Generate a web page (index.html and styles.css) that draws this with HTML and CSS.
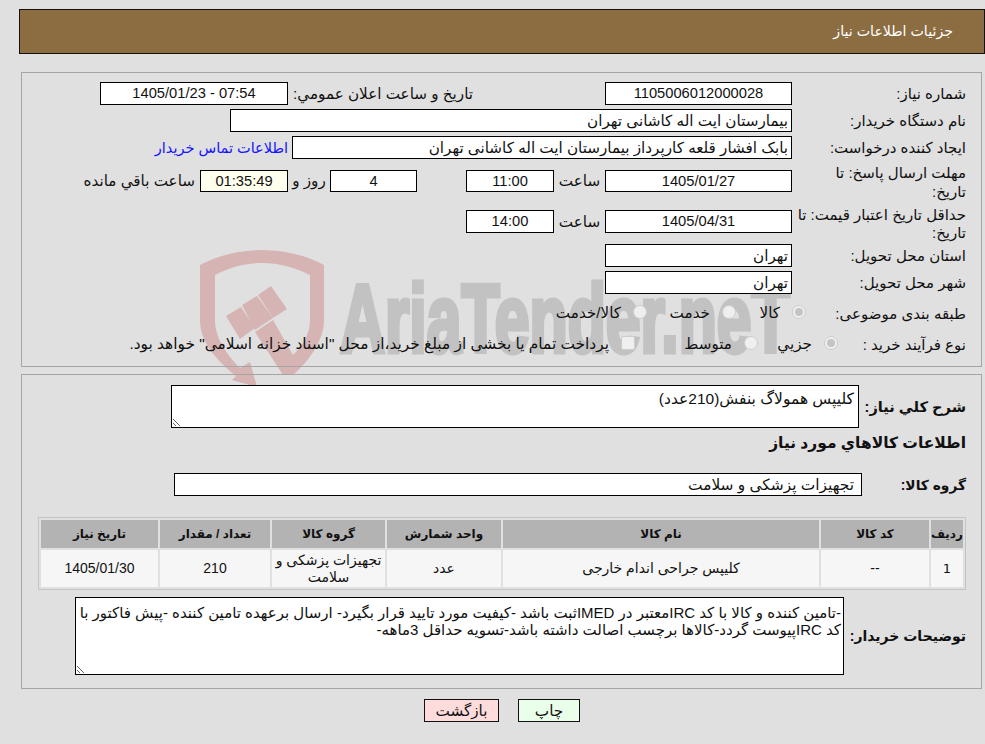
FILE: index.html
```html
<!DOCTYPE html>
<html lang="fa" dir="rtl">
<head>
<meta charset="utf-8">
<title>جزئيات اطلاعات نياز</title>
<link rel="stylesheet" href="styles.css">
</head>
<body>
<div class="watermark" aria-hidden="true">
  <svg class="wm-logo" viewBox="0 0 140 140" width="140" height="140">
    <path class="wm-red" d="M0 15 C20 5 40 0 62 0 C84 0 105 5 124 15 L124 70 C124 90 110 110 93 125 L83 125 L55 82 L73 70 L93 105 C103 95 110 84 110 70 L110 25 C94 17 78 13 62 13 C46 13 30 17 15 25 L15 70 C15 88 27 105 40 118 L50 112 L57 137 L32 130 L36 126 C16 110 0 92 0 70 Z"/>
    <path class="wm-red" d="M26 66 L41 57 L55 78 L40 89 Z"/>
    <path class="wm-red" d="M42 55 L57 46 L73 68 L55 80 Z"/>
    <path class="wm-red" d="M58 45 L71 36 L87 59 L73 68 Z"/>
  </svg>
  <div class="wm-text">AriaTender.neT</div>
</div>

<header class="title-bar">جزئیات اطلاعات نیاز</header>

<section class="panel panel-top">
  <div class="row">
    <div class="lbl">شماره نیاز:</div>
    <div class="box w187 center">1105006012000028</div>
    <div class="pub">تاریخ و ساعت اعلان عمومي:</div>
    <div class="box w188 center ltr">1405/01/23 - 07:54</div>
  </div>
  <div class="row">
    <div class="lbl">نام دستگاه خریدار:</div>
    <div class="box buyer">بیمارستان ایت اله کاشانی تهران</div>
  </div>
  <div class="row">
    <div class="lbl">ایجاد کننده درخواست:</div>
    <div class="box creator">بابک افشار قلعه کارپرداز بیمارستان ایت اله کاشانی تهران</div>
    <a class="contact" href="#">اطلاعات تماس خریدار</a>
  </div>
  <div class="row tall t1">
    <div class="lbl">مهلت ارسال پاسخ: تا تاریخ:</div>
    <div class="box w187 center">1405/01/27</div>
    <div class="hour">ساعت</div>
    <div class="box w88 center">11:00</div>
    <div class="box w87 center days">4</div>
    <div class="day-lbl">روز و</div>
    <div class="box w88 center timer">01:35:49</div>
    <div class="remain">ساعت باقي مانده</div>
  </div>
  <div class="row tall t2">
    <div class="lbl">حداقل تاریخ اعتبار قیمت: تا تاریخ:</div>
    <div class="box w187 center">1405/04/31</div>
    <div class="hour">ساعت</div>
    <div class="box w88 center">14:00</div>
  </div>
  <div class="row">
    <div class="lbl">استان محل تحویل:</div>
    <div class="box w187">تهران</div>
  </div>
  <div class="row">
    <div class="lbl">شهر محل تحویل:</div>
    <div class="box w187">تهران</div>
  </div>
  <div class="row opts o-cat">
    <div class="lbl">طبقه بندی موضوعی:</div>
    <div class="opt w70"><span class="radio on"></span><span>کالا</span></div>
    <div class="opt w89"><span class="radio"></span><span>خدمت</span></div>
    <div class="opt"><span class="radio"></span><span>کالا/خدمت</span></div>
  </div>
  <div class="row opts o-type">
    <div class="lbl">نوع فرآیند خرید :</div>
    <div class="opt w80"><span class="radio on"></span><span>جزیي</span></div>
    <div class="opt w123"><span class="radio"></span><span>متوسط</span></div>
    <div class="opt"><span class="check"></span><span class="treasury">پرداخت تمام یا بخشی از مبلغ خرید،از محل "اسناد خزانه اسلامی" خواهد بود.</span></div>
  </div>
</section>

<section class="panel panel-main">
  <div class="line l-desc">
    <div class="blbl">شرح کلي نیاز:</div>
    <textarea class="area desc" readonly>کلیپس همولاگ بنفش(210عدد)</textarea>
  </div>
  <h2 class="goods-title">اطلاعات کالاهاي مورد نیاز</h2>
  <div class="line l-group">
    <div class="blbl">گروه کالا:</div>
    <div class="box group">تجهیزات پزشکی و سلامت</div>
  </div>
  <table class="goods">
    <thead>
      <tr><th class="c1">ردیف</th><th class="c2">کد کالا</th><th class="c3">نام کالا</th><th class="c4">واحد شمارش</th><th class="c5">گروه کالا</th><th class="c6">تعداد / مقدار</th><th class="c7">تاریخ نیاز</th></tr>
    </thead>
    <tbody>
      <tr><td class="num">1</td><td>--</td><td>کلیپس جراحی اندام خارجی</td><td>عدد</td><td>تجهیزات پزشکی و سلامت</td><td>210</td><td>1405/01/30</td></tr>
    </tbody>
  </table>
  <div class="line l-notes">
    <div class="blbl">توضیحات خریدار:</div>
    <textarea class="area notes" readonly>-تامین کننده و کالا با کد IRCمعتبر در IMEDثبت باشد -کیفیت مورد تایید قرار بگیرد- ارسال برعهده تامین کننده -پیش فاکتور با کد IRCپیوست گردد-کالاها برچسب اصالت داشته باشد-تسویه حداقل 3ماهه-</textarea>
  </div>
</section>

<div class="actions">
  <button class="btn print">چاپ</button>
  <button class="btn back">بازگشت</button>
</div>
</body>
</html>
```
FILE: styles.css
```css
html, body { margin: 0; padding: 0; }
body {
  position: relative;
  width: 985px;
  height: 744px;
  overflow: hidden;
  background: #e0e0e0;
  font-family: "Liberation Sans", "DejaVu Sans", sans-serif;
  font-size: 15.2px;
  color: #111;
  box-sizing: border-box;
  padding: 9px 0 0 19px;
}
.title-bar {
  box-sizing: border-box;
  height: 45px;
  border: 1px solid #111;
  background: #8c6d42;
  color: #fff;
  line-height: 43px;
  padding-right: 31px;
  font-size: 14.2px;
}
.panel {
  box-sizing: border-box;
  border: 1px solid #a5a5a5;
  margin: 0 3px 0 2px;
}
.panel-top { margin-top: 18px; height: 295px; padding: 9px 15px 0 0; }
.panel-main { margin-top: 7px; height: 315px; padding: 10px 15px 0 0; }

.row { display: flex; align-items: center; height: 23px; margin-bottom: 4px; }
.lbl { flex: none; width: 174px; line-height: 19px; padding-left: 4px; box-sizing: border-box; font-size: 15px; }
.box {
  flex: none;
  box-sizing: border-box;
  border: 1px solid #000;
  background: #fff;
  height: 23px;
  line-height: 21px;
  padding: 0 3px;
  white-space: nowrap;
}
.center { text-align: center; font-size: 14.7px; }
.ltr { direction: ltr; }
.w187 { width: 187px; }
.w188 { width: 188px; }
.w88 { width: 88px; }
.w87 { width: 87px; }
.pub { flex: none; box-sizing: border-box; width: 317px; padding: 0 132px 0 5px; white-space: nowrap; }
.buyer { width: 562px; }
.creator { width: 500px; }
.contact { color: #1414ff; text-decoration: none; margin-right: 4px; white-space: nowrap; font-size: 14.5px; }

.tall { align-items: flex-start; }
.t1 { height: 38px; margin-bottom: 4px; }
.t1 .lbl { padding-left: 30px; margin-left: 0; }
.t1 .box { height: 22px; margin-top: 7px; line-height: 20px; }
.t1 .hour, .t1 .day-lbl, .t1 .remain { margin-top: 7px; line-height: 22px; }
.t2 { height: 37px; margin-bottom: 2px; }
.t2 .lbl { line-height: 18px; padding: 1px 0 0; }
.t2 .box { margin-top: 5px; }
.t2 .hour { margin-top: 5px; line-height: 23px; }
.hour { flex: none; width: 51px; text-align: center; }
.days { margin-right: 49px; }
.day-lbl { flex: none; width: 42px; text-align: center; white-space: nowrap; }
.timer { background: #ffffee; }
.remain { margin-right: 5px; white-space: nowrap; }

.opts { height: 24px; }
.o-cat { margin-top: 7px; margin-bottom: 7px; }
.o-cat .lbl { width: 160px; }
.o-type .lbl { width: 128px; }
.opt { display: flex; align-items: center; gap: 12px; flex: none; white-space: nowrap; }
.treasury { font-size: 15.4px; }
.w70 { width: 70px; }
.w89 { width: 89px; }
.w80 { width: 80px; }
.w123 { width: 123px; }
.radio, .check {
  flex: none;
  position: relative;
  box-sizing: border-box;
  width: 14px;
  height: 14px;
  margin-top: -3px;
  background: #efefef;
  border: 1px solid #cdcdcd;
}
.radio { border-radius: 50%; }
.check { border-radius: 2px; }
.radio.on::after { content: ""; position: absolute; inset: 2px; background: #c4c4c4; border-radius: 50%; }

.line { display: flex; align-items: center; }
.blbl { flex: none; font-weight: bold; white-space: nowrap; }
.l-desc .blbl { width: 107px; font-size: 14.6px; }
.l-group .blbl { width: 104px; font-size: 13.8px; }
.l-notes .blbl { width: 122px; font-size: 14px; }
.area {
  display: block;
  flex: none;
  box-sizing: border-box;
  border: 1px solid #000;
  border-radius: 0;
  outline: none;
  margin: 0;
  background: #fff;
  color: #111;
  font: inherit;
  line-height: 17px;
  overflow: hidden;
}
.desc { width: 688px; height: 43px; padding: 4px 4px 0; font-size: 15.5px; }
.notes { width: 769px; height: 78px; padding: 6px 2px 0; font-size: 15px; }
.goods-title { margin: 3px 0 0; font-size: 15.5px; font-weight: bold; line-height: 24px; height: 24px; }
.l-group { margin-top: 18px; }
.group { width: 688px; padding-right: 7px; font-size: 15.4px; }
.goods {
  box-sizing: border-box;
  border-collapse: separate;
  border-spacing: 2px;
  border: 1px solid #c4c4c4;
  margin: 21px 0 0;
  width: 928px;
  table-layout: fixed;
  text-align: center;
  font-size: 14px;
}
.goods th { background: #b3b3b3; height: 28px; padding: 0; font-weight: bold; font-size: 12px; }
.goods td { background: #f6f6f6; height: 37px; padding: 0 2px; line-height: 17px; }
.goods .num { font-family: "DejaVu Sans", sans-serif; font-size: 13px; }
.c1 { width: 32px; } .c2 { width: 108px; } .c3 { width: 316px; } .c4 { width: 114px; } .c5 { width: 113px; } .c6 { width: 110px; } .c7 { width: 117px; }
.l-notes { margin-top: 7px; }

.actions { display: flex; justify-content: center; gap: 19px; margin-top: 10px; }
.btn { box-sizing: border-box; width: 62px; height: 23px; border: 1px solid #111; border-radius: 0; padding: 0; font: inherit; color: #111; line-height: 21px; }
.print { background: #eaffea; }
.back { background: #ffdcdc; width: 75px; }

.watermark { position: absolute; inset: 0; z-index: -1; overflow: hidden; }
.wm-logo { position: absolute; left: 200px; top: 250px; }
.wm-red { fill: #d6b4b4; }
.wm-text {
  position: absolute;
  left: 340px;
  top: 264px;
  direction: ltr;
  font-family: "Liberation Sans", sans-serif;
  font-weight: bold;
  font-size: 96px;
  line-height: 110px;
  color: #c2c2c2;
  -webkit-text-stroke: 5px #c2c2c2;
  transform: scaleX(.65);
  transform-origin: left center;
  white-space: nowrap;
}
```
